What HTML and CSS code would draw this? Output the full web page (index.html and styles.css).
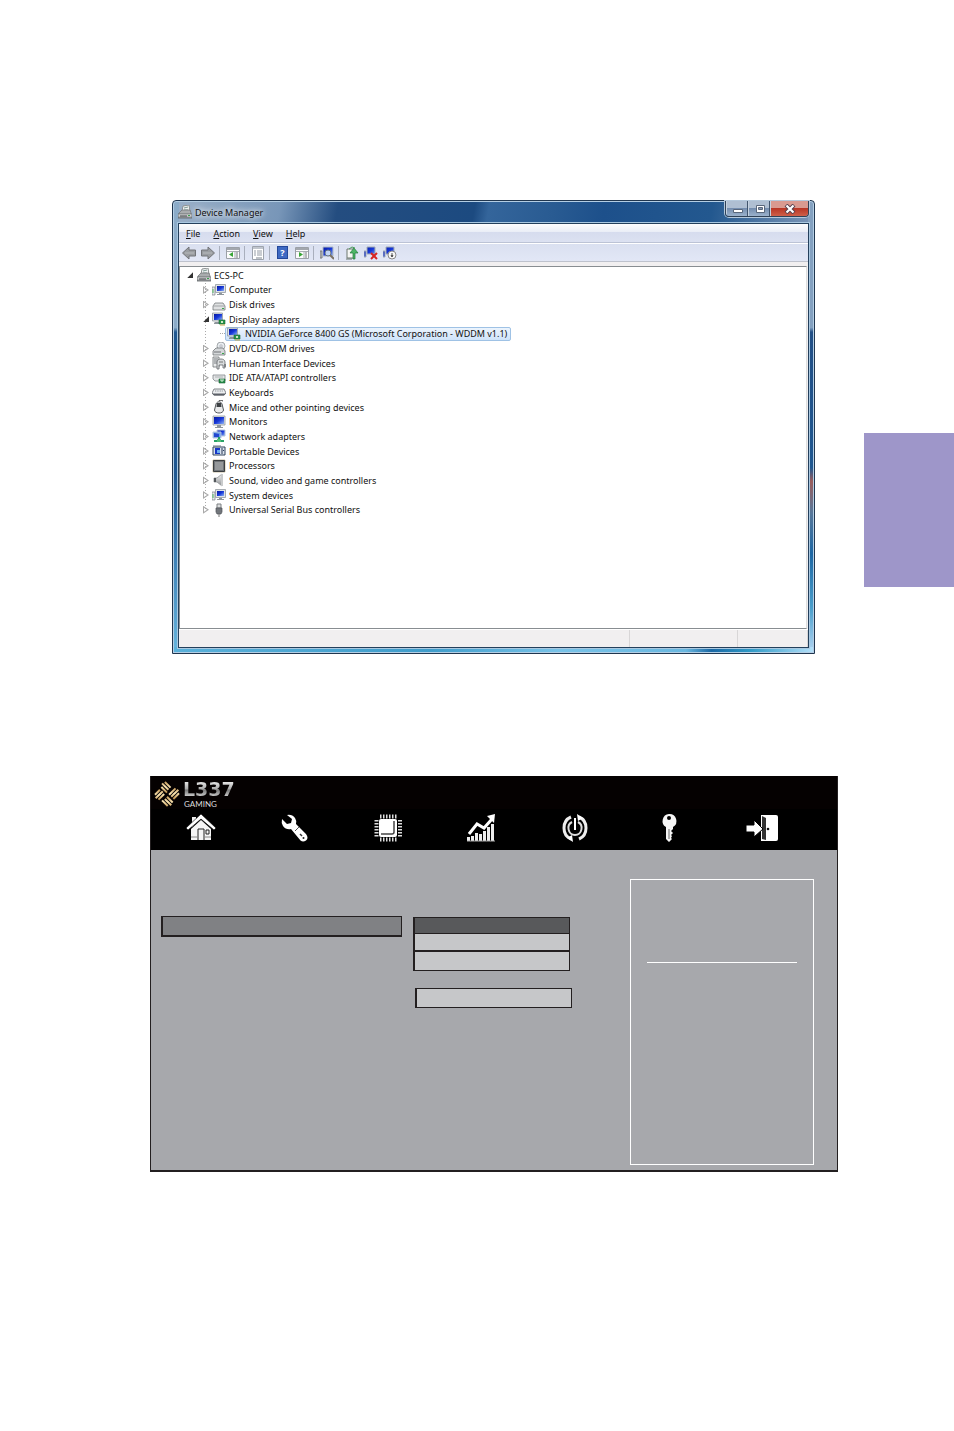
FILE: index.html
```html
<!DOCTYPE html>
<html lang="en">
<head>
<meta charset="utf-8">
<meta name="viewport" content="width=device-width, initial-scale=1">
<title>Device Manager</title>
<link rel="stylesheet" href="styles.css">
</head>
<body>
<svg class="defs" aria-hidden="true">
  <defs>
    <linearGradient id="gold" x1="0" y1="0" x2="1" y2="1"><stop offset="0" stop-color="#b98a48"/><stop offset=".5" stop-color="#fbe6b4"/><stop offset="1" stop-color="#b5853f"/></linearGradient>
    <linearGradient id="blue" x1="0" y1="0" x2="1" y2="1"><stop offset="0" stop-color="#0618a0"/><stop offset=".5" stop-color="#1738d8"/><stop offset="1" stop-color="#8fb4f4"/></linearGradient>
    <linearGradient id="metal" x1="0" y1="0" x2="0" y2="1"><stop offset="0" stop-color="#f4f4f4"/><stop offset="1" stop-color="#8c8f92"/></linearGradient>
  </defs>
  <symbol id="printer" viewBox="0 0 14 14"><path d="M5 1l6-1 1 6H4z" fill="#eef0f1" stroke="#8c9090"/><path d="M6 3l4-1M6 5h4" stroke="#7b9991"/><path d="M1 8l3-3h8l1 3v2H1z" fill="#a9acae" stroke="#6e7173" stroke-width=".7"/><path d="M0 9h14v4H0z" fill="url(#metal)" stroke="#5e6265" stroke-width=".8"/><path d="M2 11h7" stroke="#45494c"/><path d="M10 10h2v1h-2z" fill="#39a34b"/></symbol>
  <symbol id="monitor" viewBox="0 0 14 14"><path d="M1 1h12v9H1z" fill="#dfe3e6" stroke="#9299a0" stroke-width=".8"/><path d="M2 2h10v7H2z" fill="url(#blue)"/><path d="M5 10h4v2h2v1H3v-1h2z" fill="#8e969c"/></symbol>
  <symbol id="computer" viewBox="0 0 14 14"><path d="M0 4h3v8H0z" fill="#e6e9eb" stroke="#7c8387" stroke-width=".7"/><path d="M1 6v4" stroke="#51b85e"/><path d="M3.500 1.500h10v8h-10z" fill="#dfe3e6" stroke="#9299a0" stroke-width=".8"/><path d="M5 3h7v5H5z" fill="url(#blue)"/><path d="M7 10h3v1h2v1H5v-1h2z" fill="#8e969c"/></symbol>
  <symbol id="disk" viewBox="0 0 14 14"><path d="M1 8l2-3h8l2 3v4H1z" fill="#dfe1e2" stroke="#777b7e" stroke-width=".8"/><path d="M1 8h12" stroke="#a1a4a6"/><path d="M10 10h2v1h-2z" fill="#36a547"/></symbol>
  <symbol id="display" viewBox="0 0 14 14"><path d="M.5 1h10v8H.500z" fill="#dfe3e6" stroke="#9299a0" stroke-width=".8"/><path d="M2 2h8v6H2z" fill="url(#blue)"/><path d="M3 10h4v2H2v-1z" fill="#8e969c"/><path d="M7 8h6v4H7z" fill="#27964b" stroke="#176434" stroke-width=".6"/><path d="M9 9h2v2H9z" fill="#d2e5c5"/><path d="M8 13h5" stroke="#c6a84a"/></symbol>
  <symbol id="dvd" viewBox="0 0 14 14"><circle cx="9" cy="4" r="4" fill="#e8ecef" stroke="#92979a" stroke-width=".8"/><circle cx="9" cy="4" r="1.200" fill="#fff" stroke="#9598a6" stroke-width=".7"/><path d="M1 9l3-3h7l2 3v4H1z" fill="#d5d8da" stroke="#727679" stroke-width=".8"/><path d="M2 10h7" stroke="#6e7174"/><path d="M10 11h2v1h-2z" fill="#38a64a"/></symbol>
  <symbol id="hid" viewBox="0 0 14 14"><path d="M1 1h6v10H1z" fill="#e9ebec" stroke="#6d7174" stroke-width=".8"/><path d="M2 3h4M2 5h4M2 7h3" stroke="#777b7e"/><path d="M5 6c0-4 8-4 8 0v6h-2V9H7v4H5z" fill="#d9dcdd" stroke="#64686c" stroke-width=".8"/><path d="M7 6h4" stroke="#777"/><path d="M12 8h2v3h-2z" fill="#7d8184"/></symbol>
  <symbol id="ide" viewBox="0 0 14 14"><path d="M1 4h12v6H3l-2-2z" fill="#e4e6e7" stroke="#82868a" stroke-width=".8"/><path d="M3 6h8" stroke="#b1b5b7"/><path d="M7 8h6v4H7z" fill="#29914b" stroke="#185f32" stroke-width=".6"/><path d="M9 8v2h2V8" fill="none" stroke="#d9f3de"/></symbol>
  <symbol id="keyboard" viewBox="0 0 14 14"><path d="M2 4h10l2 4-2 2H2L0 8z" fill="#eceef0" stroke="#63676d" stroke-width=".8"/><path d="M3 6h8" stroke="#8b9097" stroke-dasharray="1 .7"/><path d="M0 8.500h14l-2 2H2z" fill="#5c6068"/></symbol>
  <symbol id="mouse" viewBox="0 0 14 14"><path d="M4 4c1-3 5-3 6 0l1.500 6c0 4-9 4-9 0z" fill="#e9eaeb" stroke="#54585b"/><path d="M7 1c0-1 2-1 4 0" fill="none" stroke="#333"/><path d="M5 3h4l.5 4h-5z" fill="#3d4144"/></symbol>
  <symbol id="network" viewBox="0 0 14 14"><path d="M5 1h8v6H5z" fill="url(#blue)" stroke="#b5c5dd"/><path d="M1 3h8v6H1z" fill="#6ca0e9" stroke="#b5c5dd"/><path d="M2 4l5 1v3H2z" fill="#2348d0"/><path d="M7 8v3M2 12h10" stroke="#28a266" stroke-width="2"/><path d="M5 10h4v3H5z" fill="#54bd79"/></symbol>
  <symbol id="portable" viewBox="0 0 14 14"><path d="M1 3h12v8H1z" fill="#d9e2ed" stroke="#33445b"/><path d="M3 4h5v6H3z" fill="#1735c5"/><path d="M5 6h3v3H5z" fill="#6db0ef"/><path d="M10 4v6" stroke="#293954"/><path d="M1 2h8" stroke="#667486"/><path d="M11 6h1v1h-1z" fill="#2b3f61"/></symbol>
  <symbol id="cpu" viewBox="0 0 14 14"><path d="M2 0v14M4 0v14M6 0v14M8 0v14M10 0v14M12 0v14M0 2h14M0 4h14M0 6h14M0 8h14M0 10h14M0 12h14" stroke="#b6a67e" stroke-width=".7"/><path d="M1.500 1.500h11v11h-11z" fill="#707477" stroke="#3b3e40"/><path d="M3 3h8v8H3z" fill="#96999b"/></symbol>
  <symbol id="sound" viewBox="0 0 14 14"><path d="M2 5h3l5-4v12L5 9H2z" fill="url(#metal)" stroke="#8e9294" stroke-width=".8"/><path d="M2 5h2v4H2z" fill="#54585b"/><path d="M10 1v12" stroke="#c9cbcc" stroke-width="2"/></symbol>
  <symbol id="usb" viewBox="0 0 14 14"><path d="M5 1h4v4H5z" fill="#dcdedf" stroke="#7c8083"/><path d="M4 5h6v4l-1 2H5l-1-2z" fill="#72767b" stroke="#505459" stroke-width=".7"/><path d="M7 11v3" stroke="#777"/></symbol>
  <symbol id="arrow" viewBox="0 0 14 14"><path d="M.5 7L7 1v3h6.500v6H7v3z" fill="#9a9da1" stroke="#737579"/><path d="M3 7h9" stroke="#b7babd"/></symbol>
  <symbol id="pane" viewBox="0 0 14 14"><path d="M.5 1.500h13v11H.500z" fill="#fbfbfc" stroke="#9ba0a7"/><path d="M1 2h12v2H1z" fill="#a3a7ae"/><path d="M9 5v7M1 5.500h12" stroke="#a9adb3"/><path d="M10 7h2M10 9h2M10 11h2" stroke="#72787f"/><path d="M7 6v5L3 8.500z" fill="#38a536"/></symbol>
  <symbol id="prop" viewBox="0 0 14 14"><path d="M1.500.500h11v13h-11z" fill="#fff" stroke="#9da3ad"/><path d="M2 1h10v2H2z" fill="#c1c6ce"/><path d="M3 5h2M3 7h2M3 9h2M6 5h5M6 7h5M6 9h5" stroke="#949ba5"/><path d="M5 12h6" stroke="#7f8790"/></symbol>
  <symbol id="scan" viewBox="0 0 14 14"><path d="M0 5h2v7H0z" fill="#c2c7cb" stroke="#777"/><path d="M3 1h10v9H3z" fill="url(#blue)" stroke="#b0bac5"/><circle cx="8" cy="7" r="3" fill="#dcecf8" fill-opacity=".85" stroke="#667481"/><path d="M10 9l4 4" stroke="#7c7265" stroke-width="2"/></symbol>
  <symbol id="update" viewBox="0 0 14 14"><path d="M2 3h7v9H2z" fill="#f5f6f4" stroke="#6f7970"/><path d="M1 13h6" stroke="#6b766c"/><path d="M10 13V7h3L9 2 5 7h3v6z" fill="#4eb768" stroke="#247a3a" stroke-width=".7"/><path d="M4 3l3-2 3 1" fill="none" stroke="#4d9c5d"/></symbol>
  <symbol id="remove" viewBox="0 0 14 14"><path d="M0 5h2v6H0zM3 1h8v7H3z" fill="url(#blue)" stroke="#a2abb5"/><path d="M7 7l6 6M13 7l-6 6" stroke="#d72522" stroke-width="2"/></symbol>
  <symbol id="disable" viewBox="0 0 14 14"><path d="M0 5h2v6H0zM3 1h8v7H3z" fill="url(#blue)" stroke="#a2abb5"/><circle cx="9" cy="9" r="4" fill="#f7f7f7" stroke="#888"/><path d="M9 7v4M8 9.500l1 1.500 1-1.500z" stroke="#555" fill="#555"/></symbol>
</svg>

<div class="page">
  <main class="content">
    <section class="window" aria-label="Device Manager">
      <header class="titlebar">
        <h1 class="title"><svg><use href="#printer"/></svg>Device Manager</h1>
        <div class="caption">
          <button class="cap" aria-label="Minimize"><svg viewBox="0 0 12 10"><path d="M1.500 5.500h9v3h-9z" fill="#fff" stroke="#59677b"/></svg></button>
          <button class="cap" aria-label="Maximize"><svg viewBox="0 0 12 10"><path d="M2.500 1.500h8v7h-8z" fill="#fff" stroke="#59677b"/><path d="M4.500 3.500h4v2h-4z" fill="#8a9ab2" stroke="#59677b"/></svg></button>
          <button class="cap cap-close" aria-label="Close"><svg viewBox="0 0 12 10"><path d="M2 1l8 8M10 1L2 9" stroke="#553f4c" stroke-width="4"/><path d="M2.500 1.500l7 7M9.500 1.500l-7 7" stroke="#fff" stroke-width="2.200"/></svg></button>
        </div>
      </header>
      <div class="client">
        <nav class="menubar">
          <button><u>F</u>ile</button><button><u>A</u>ction</button><button><u>V</u>iew</button><button><u>H</u>elp</button>
        </nav>
        <div class="toolbar" role="toolbar">
          <button aria-label="Back"><svg><use href="#arrow"/></svg></button>
          <button aria-label="Forward" class="flip"><svg><use href="#arrow"/></svg></button>
          <i></i>
          <button aria-label="Console tree"><svg><use href="#pane"/></svg></button>
          <i></i>
          <button aria-label="Properties"><svg><use href="#prop"/></svg></button>
          <i></i>
          <button aria-label="Help" class="help">?</button>
          <button aria-label="Action pane"><svg viewBox="0 0 14 14"><path d="M.5 1.500h13v11H.500z" fill="#fbfbfc" stroke="#9ba0a7"/><path d="M1 2h12v2H1z" fill="#a3a7ae"/><path d="M9 5v7M1 5.500h12" stroke="#a9adb3"/><path d="M10 7h2M10 9h2M10 11h2" stroke="#72787f"/><path d="M4 6v5l4-2.500z" fill="#38a536"/></svg></button>
          <i></i>
          <button aria-label="Scan for hardware changes"><svg><use href="#scan"/></svg></button>
          <i></i>
          <button aria-label="Update driver"><svg><use href="#update"/></svg></button>
          <button aria-label="Uninstall"><svg><use href="#remove"/></svg></button>
          <button aria-label="Disable"><svg><use href="#disable"/></svg></button>
        </div>
        <div class="tree-pane">
          <ul class="tree">
            <li class="root open"><svg><use href="#printer"/></svg><span>ECS-PC</span></li>
            <li><svg><use href="#computer"/></svg><span>Computer</span></li>
            <li><svg><use href="#disk"/></svg><span>Disk drives</span></li>
            <li class="open"><svg><use href="#display"/></svg><span>Display adapters</span></li>
            <li class="leaf"><div class="selected"><svg><use href="#display"/></svg><span>NVIDIA GeForce 8400 GS (Microsoft Corporation - WDDM v1.1)</span></div></li>
            <li><svg><use href="#dvd"/></svg><span>DVD/CD-ROM drives</span></li>
            <li><svg><use href="#hid"/></svg><span>Human Interface Devices</span></li>
            <li><svg><use href="#ide"/></svg><span>IDE ATA/ATAPI controllers</span></li>
            <li><svg><use href="#keyboard"/></svg><span>Keyboards</span></li>
            <li><svg><use href="#mouse"/></svg><span>Mice and other pointing devices</span></li>
            <li><svg><use href="#monitor"/></svg><span>Monitors</span></li>
            <li><svg><use href="#network"/></svg><span>Network adapters</span></li>
            <li><svg><use href="#portable"/></svg><span>Portable Devices</span></li>
            <li><svg><use href="#cpu"/></svg><span>Processors</span></li>
            <li><svg><use href="#sound"/></svg><span>Sound, video and game controllers</span></li>
            <li><svg><use href="#computer"/></svg><span>System devices</span></li>
            <li><svg><use href="#usb"/></svg><span>Universal Serial Bus controllers</span></li>
          </ul>
        </div>
        <footer class="status"><span></span><span></span><span></span></footer>
      </div>
    </section>

    <section class="bios" aria-label="BIOS setup">
      <header class="brand">
        <svg viewBox="0 0 28 28"><g transform="rotate(45 14 14)" fill="url(#gold)"><path d="M4 6h8v2H4zM3 9h9v2H3zM5 12h8v2H5z"/><path d="M15 4h2v9h-2zM18 3h2v10h-2zM21 5h2v8h-2z"/><path d="M16 15h8v2h-8zM16 18h9v2h-9zM15 21h8v2h-8z"/><path d="M5 16h2v7H5zM8 15h2v10H8zM11 16h2v8h-2z"/></g></svg>
        <div class="wordmark"><b>L337</b><span>GAMING</span></div>
      </header>
      <nav class="tabs">
        <button aria-label="Main"><svg viewBox="0 0 30 30"><path d="M6 4h4v6l-4 4z" fill="#eee"/><path d="M5 16L15 7l10 9v11H5z" fill="#f5f5f5"/><path d="M0 15L15 1l15 14-2 2L15 6 2 17z" fill="#fff" stroke="#000" stroke-width=".6"/><path d="M12 27V16h6v11M20 17h3v4h-3z" fill="none" stroke="#222"/><path d="M5 24h7M18 24h7" stroke="#888"/></svg></button>
        <button aria-label="Advanced"><svg viewBox="0 0 30 30"><path d="M8 2q5-1 8 3 2 3 1 6l10 10q3 4 0 6.500-3 2-5.500 0L12 16q-5 1-8-3-2-3-1-7l5 5 4-1 1-4z" fill="#fff"/><path d="M16 18l4-4" stroke="#555"/><path d="M21 21l2 2" stroke="#333" stroke-width="1.500"/><circle cx="24.500" cy="25" r="1" fill="#222"/></svg></button>
        <button aria-label="Chipset"><svg viewBox="0 0 30 30"><path d="M7 3.500h17M7 26.500h17" stroke="#ddd" stroke-width="4" stroke-dasharray="1.500 1.500"/><path d="M3.500 7v17M27 7v17" stroke="#ddd" stroke-width="4" stroke-dasharray="1.500 1.500"/><rect x="6" y="6" width="18" height="18" rx="2" fill="#fff"/><path d="M21 8v11q0 2-2 2H8" fill="none" stroke="#444" stroke-width="1.500"/><circle cx="9" cy="21" r="1" fill="#777"/></svg></button>
        <button aria-label="Tweak"><svg viewBox="0 0 30 30"><path d="M1 28v-4h3v4zm4 0v-5h3v5zm4 0v-8h3v8zm4 0v-7h3v7zm4 0V18h3v10zm4 0V14h3v14zm4 0V11h3v17z" fill="#eee"/><path d="M1 28h28" stroke="#aaa"/><path d="M3 21l8-10 7 4 8-9" fill="none" stroke="#fff" stroke-width="3"/><path d="M21 3l8-2-1 9z" fill="#fff"/></svg></button>
        <button aria-label="Power"><svg viewBox="0 0 30 30"><path d="M11 4Q4 7 4 15t7 11M19 4q7 3 7 11t-7 11" fill="none" stroke="#eee" stroke-width="3"/><path d="M17 1l6 4-5 3zM13 29l-6-4 5-3z" fill="#fff"/><path d="M12 9c-6 3-4 13 3 13s9-10 3-13" fill="none" stroke="#ddd" stroke-width="2"/><path d="M15 5v12" stroke="#fff" stroke-width="2"/></svg></button>
        <button aria-label="Security"><svg viewBox="0 0 30 30"><path fill-rule="evenodd" d="M15 1a7 7 0 0 1 4 13v2l-2 2 2 2-2 2 1 1-1 2 1 1-3 3-3-3V14A7 7 0 0 1 15 1zm0 2a2 2 0 0 0 0 4 2 2 0 0 0 0-4z" fill="#f6f6f6"/><path d="M15 16v10" stroke="#666"/></svg></button>
        <button aria-label="Exit"><svg class="wide" viewBox="0 0 34 30"><path d="M16 2h15q2 0 2 2v22q0 2-2 2H16z" fill="#fff"/><path d="M17 3l4 2v22l-4-1z" fill="#333"/><path d="M1 12h8V7l9 9-9 8v-5H1z" fill="#fff" stroke="#000"/><circle cx="23" cy="16" r="1.300" fill="#111"/></svg></button>
      </nav>
      <div class="setup">
        <div class="options">
          <button class="field field-name" aria-label="Setting"></button>
          <div class="values">
            <div class="popup" role="listbox" aria-label="Values">
              <button class="choice active" role="option" aria-selected="true" aria-label="First value"></button>
              <button class="choice" role="option" aria-label="Second value"></button>
              <button class="choice" role="option" aria-label="Third value"></button>
            </div>
            <button class="field field-value" aria-label="Value"></button>
          </div>
        </div>
        <aside class="help-box"><hr></aside>
      </div>
    </section>
  </main>
  <aside class="chapter-tab"></aside>
</div>
</body>
</html>
```
FILE: styles.css
```css
* { box-sizing: border-box; }
body { margin: 0; background: #fff; font-family: "Noto Sans", "Open Sans", sans-serif; font-size: 9px; color: #111; }
button { margin: 0; padding: 0; border: 0; background: none; font: inherit; color: inherit; }
.defs { position: absolute; width: 0; height: 0; }

.page { display: grid; grid-template-columns: 1fr 90px; }
.content { padding: 200px 26px 259px 150px; }
.chapter-tab { height: 154px; margin-top: 433px; background: #9e96c9; }

/* Device Manager window */
.window {
  margin: 0 23px 122px 22px;
  padding: 0 5px 5px;
  border: 1px solid #20364f;
  border-radius: 4px 4px 0 0;
  background:
    linear-gradient(90deg, #5ab1da, #3f9dcb 40%, #78c3e8 60%, #6ab8e0 80%, #1a68a5 84%, #2f9ac6 90%, #b5e1fa) bottom / 100% 6px no-repeat,
    linear-gradient(#8babc8, #8babc8 28%, #1f5790 29%, #1f5790 60%, #3f83b8 80%, #67b6de) left / 6px 100% no-repeat,
    linear-gradient(#84a1c0, #84a1c0 28%, #224f86 29%, #1f5790 59%, #9a5d5c 62%, #57779a 69%, #1d67a4 78%, #4a9fcc 90%, #b4d6f3) right / 6px 100% no-repeat,
    linear-gradient(100deg, #9bb0c8, #7896b8 15%, #244d80 23%, #1c4a80 42%, #34659b 44%, #295b92 53%, #1d508b 60%, #23588f 75%, #8099b9 90%);
  box-shadow: inset 0 0 0 1px #b4cee4;
}
.titlebar { display: flex; justify-content: space-between; align-items: flex-start; height: 22px; }
.title { display: flex; align-items: center; gap: 3px; height: 22px; margin: 0; font-size: 9px; font-weight: 400; text-shadow: 0 0 5px #fff, 0 0 8px #fff; }
.title svg, .tree svg { width: 14px; height: 14px; flex: none; }
.caption { display: flex; height: 16px; border: 1px solid #304257; border-top: 0; border-radius: 0 0 4px 4px; overflow: hidden; box-shadow: 0 0 0 1px #b5c9dc; }
.cap { display: grid; place-items: center; width: 22px; border-left: 1px solid #c5d2e0; background: linear-gradient(#afbfd2 45%, #758eaf 50%, #9bb2cc); }
.cap + .cap { box-shadow: -1px 0 #41556d; }
.cap svg { width: 12px; height: 10px; }
.cap-close { width: 38px; background: linear-gradient(#d99a90 45%, #b93726 50%, #cf6049); }

.client { border: 1px solid #24405c; background: #f1eff0; outline: 1px solid #a9c8e1; }
.menubar { display: flex; gap: 13px; height: 19px; padding-left: 7px; background: linear-gradient(#fdfdfe, #e9edf6 45%, #d6dcee 46%, #dce1f1); border-bottom: 1px solid #bcc3d5; line-height: 17px; }
.toolbar { display: flex; align-items: center; height: 19px; background: linear-gradient(#dae0f0, #e2e7f6); border-top: 1px solid #fff; border-bottom: 1px solid #bec2cd; }
.toolbar button { display: grid; place-items: center; width: 19px; }
.toolbar svg { width: 14px; height: 14px; }
.toolbar i { width: 6px; height: 14px; background: linear-gradient(#a9afbd, #a9afbd) 2px 0 / 1px 100% no-repeat; }
.toolbar .flip svg { transform: scaleX(-1); }
.toolbar .help { width: 11px; height: 13px; margin: 0 4px; border: 1px solid #23479a; background: #3e69c3; color: #fff; font-weight: 700; line-height: 10px; }

.tree-pane { height: 363px; margin: 4px 1px 0 0; padding: 1px 7px; border: 1px solid #888d91; border-right-color: #dedede; background: #fff; }
.tree { display: grid; grid-auto-rows: 1fr; height: 249px; margin: 0; padding: 0; list-style: none; background: repeating-linear-gradient(#aaa 0 1px, transparent 1px 3px) 18px 15px / 1px 228px no-repeat; }
.tree li { display: flex; align-items: center; gap: 3px; padding-left: 16px; white-space: nowrap; }
.tree li::before { content: ""; width: 6px; height: 8px; background: #aaa; clip-path: polygon(0 0, 100% 50%, 0 100%, 0 0, 1px 2px, 1px 6px, 4px 4px, 1px 2px); }
.tree .open::before { width: 6px; height: 6px; background: #333; clip-path: polygon(100% 0, 100% 100%, 0 100%); }
.tree .root { padding-left: 0; }
.tree .root > svg { margin-left: 1px; }
.tree .leaf { padding-left: 33px; }
.tree .leaf::before { width: 5px; height: 1px; margin-right: -3px; background: repeating-linear-gradient(90deg, #aaa 0 1px, transparent 1px 2px); clip-path: none; }
.selected { display: flex; align-items: center; gap: 4px; height: 14px; padding: 0 3px 0 1px; border: 1px solid #9fc2e5; border-radius: 2px; background: linear-gradient(#ecf4fd, #cfe3fa); }
.status { display: grid; grid-template-columns: 1fr 108px 70px; height: 18px; border-top: 1px solid #fff; }
.status span { border-right: 1px solid #d8d6d7; }

/* BIOS setup screen */
.bios { border: solid #231f20; border-width: 0 1px 2px; background: #a7a8ac; }
.brand { display: flex; align-items: center; gap: 2px; height: 33px; padding: 2px 2px 0; background: #050101; }
.brand svg { width: 28px; height: 28px; }
.wordmark { display: grid; color: #ddd; }
.wordmark b { font: 700 19px/20px "DejaVu Sans", sans-serif; background: linear-gradient(#fff, #aaa 50%, #777 55%, #eee); background-clip: text; color: transparent; }
.wordmark span { padding-left: 1px; font: 8px/10px Lato, sans-serif; }
.tabs { display: grid; grid-template-columns: repeat(7, 1fr); height: 41px; padding: 0 28px 0 3px; background: #000; }
.tabs button { display: grid; place-items: center; padding-bottom: 4px; }
.tabs svg { width: 30px; height: 30px; }
.tabs .wide { width: 34px; }
.setup { display: flex; justify-content: space-between; padding: 29px 23px 5px 10px; }
.options { display: flex; flex: 1; gap: 11px; padding-top: 37px; margin-right: 58px; }
.field, .choice { display: block; border: 1px solid #231f20; border-left-width: 2px; background: #c6c7c9; }
.field-name { flex: 1; height: 21px; border-bottom-width: 2px; background: #808184; }
.values { width: 159px; padding-top: 1px; }
.popup { width: 157px; border: 1px solid #231f20; border-left-width: 2px; }
.choice { width: 100%; border-width: 0 0 1px; }
.choice.active { height: 16px; background: #58595b; }
.choice:nth-child(2) { height: 18px; border-bottom-width: 2px; }
.choice:last-child { height: 18px; border: 0; }
.field-value { width: 157px; height: 20px; margin: 17px 0 0 2px; }
.help-box { width: 184px; height: 286px; padding: 82px 16px 0; border: 1px solid #fff; }
.help-box hr { height: 1px; margin: 0; border: 0; background: #fff; }
```
